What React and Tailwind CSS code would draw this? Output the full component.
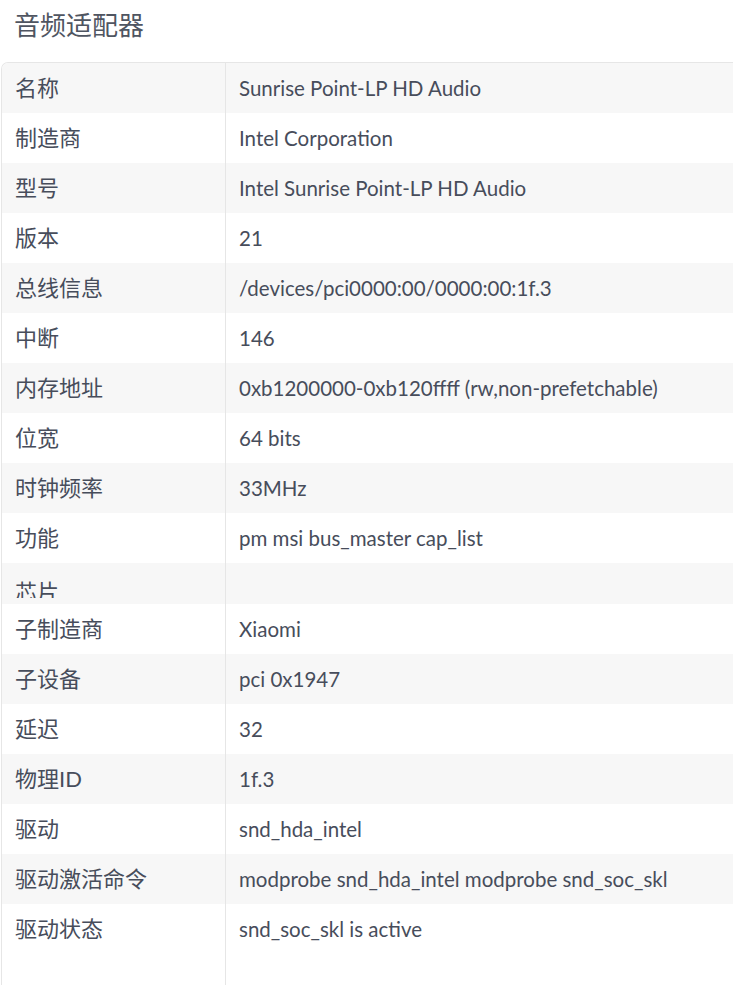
const rows = [
  ["名称", "Sunrise Point-LP HD Audio"],
  ["制造商", "Intel Corporation"],
  ["型号", "Intel Sunrise Point-LP HD Audio"],
  ["版本", "21"],
  ["总线信息", "/devices/pci0000:00/0000:00:1f.3"],
  ["中断", "146"],
  ["内存地址", "0xb1200000-0xb120ffff (rw,non-prefetchable)"],
  ["位宽", "64 bits"],
  ["时钟频率", "33MHz"],
  ["功能", "pm msi bus_master cap_list"],
  ["芯片", "", "chip"],
  ["子制造商", "Xiaomi"],
  ["子设备", "pci 0x1947"],
  ["延迟", "32"],
  ["物理ID", "1f.3"],
  ["驱动", "snd_hda_intel"],
  ["驱动激活命令", "modprobe snd_hda_intel modprobe snd_soc_skl"],
  ["驱动状态", "snd_soc_skl is active", "last"],
];

export default function App() {
  const font = {
    fontFamily: '"Lato", "Noto Sans CJK SC", sans-serif',
  };
  return (
    <div className="w-[733px] h-[985px] overflow-hidden bg-white text-[#474d5b]" style={font}>
      <h1 className="pl-[14px] pt-[7px] h-[62px] text-[26px] leading-[36px] font-normal text-[#4f5561]">音频适配器</h1>
      <div className="ml-[1px] w-[800px] border-l border-t border-[#e6e6e6] rounded-tl-[7px] overflow-hidden">
        {rows.map(([k, v, t], i) => {
          const bg = i % 2 === 0 ? "bg-[#f7f7f7]" : "bg-white";
          const h = t === "chip" ? "h-[41px]" : t === "last" ? "h-[90px]" : "h-[50px]";
          const pt = t === "chip" ? "pt-[15px] h-[35px] overflow-hidden" : "pt-[11px]";
          return (
            <div key={i} className={`grid grid-cols-[223px_1fr] overflow-hidden ${bg} ${h}`}>
              <div className="pl-[13px]">
                <div className={`${pt} text-[22px] leading-[28px] whitespace-nowrap`}>{k}</div>
              </div>
              <div className={`border-l border-[#e6e6e6] pl-[13px] pt-[11px] text-[20.5px] leading-[28px] whitespace-nowrap`}>{v}</div>
            </div>
          );
        })}
      </div>
    </div>
  );
}
